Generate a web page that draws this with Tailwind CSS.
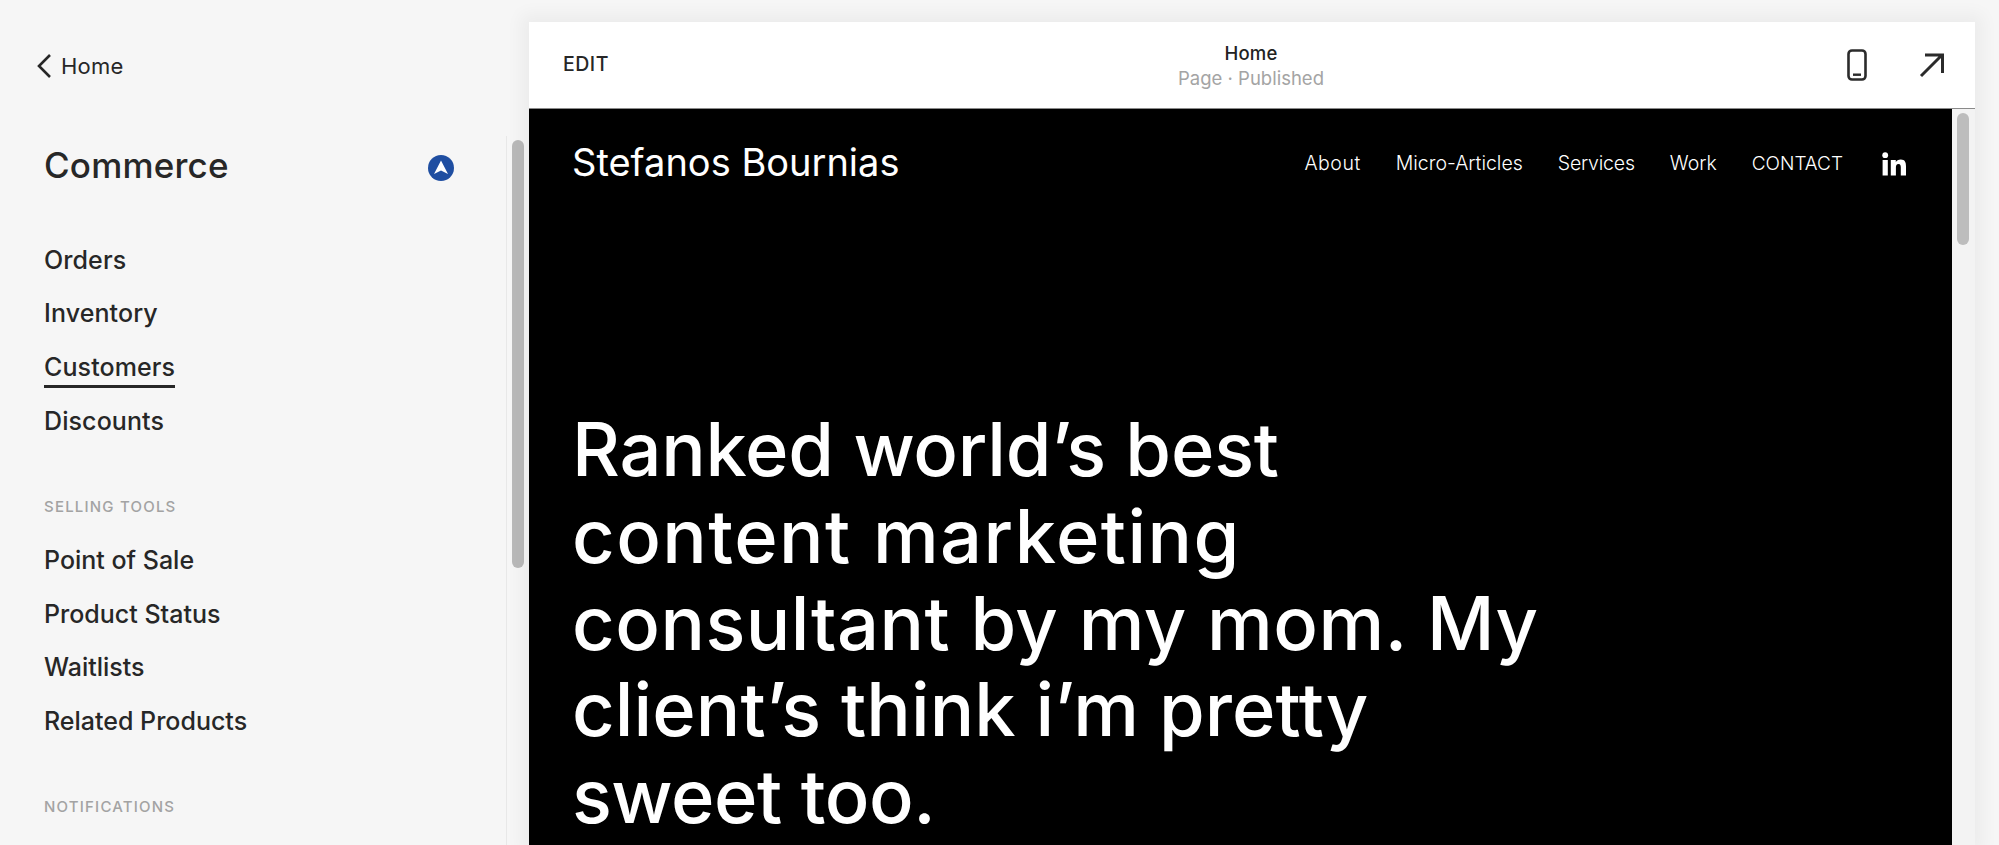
<!doctype html>
<html><head><meta charset="utf-8"><script src="https://cdn.jsdelivr.net/npm/@tailwindcss/browser@4"></script></head>
<body class="m-0">
<div class="flex h-[845px] w-[1999px] overflow-hidden bg-[#f6f6f6] font-['Inter',sans-serif] text-[#272727]">
  <aside class="flex h-full w-[529px] shrink-0">
    <div class="h-full w-[506px] shrink-0">
      <div class="flex h-[132px] items-center gap-[9px] pl-[36px]">
        <svg class="h-[26px] w-[16px]" viewBox="0 0 16 26" fill="none" stroke="#272727" stroke-width="2.6"><path d="M14 2 3 13l11 11"/></svg>
        <span class="text-[22px] leading-none tracking-[0.2px]">Home</span>
      </div>
      <div class="flex h-[66px] items-center justify-between pl-[44px] pr-[52px]">
        <h1 class="text-[35px] font-medium leading-none tracking-[0.2px]">Commerce</h1>
        <svg class="mt-[5px] h-[26px] w-[26px]" viewBox="0 0 26 26"><circle cx="13" cy="13" r="13" fill="#1f4ea1"/><path d="M13 5.5 20 19l-7-3.6L6 19z" fill="#fff"/></svg>
      </div>
      <nav class="flex flex-col pl-[44px] pt-[35px] text-[25px] font-medium leading-[54px] tracking-[0.1px]">
        <a class="h-[53px]">Orders</a>
        <a class="h-[54px]">Inventory</a>
        <a class="relative h-[54px] w-fit">Customers<span class="absolute bottom-[6px] left-0 h-[3px] w-full bg-[#272727]"></span></a>
        <a class="h-[54px]">Discounts</a>
      </nav>
      <p class="mt-[49px] pl-[44px] text-[15px] font-medium leading-[20px] tracking-[1.2px] text-[#a3a3a3]">SELLING TOOLS</p>
      <nav class="flex flex-col pl-[44px] pt-[16px] text-[25px] font-medium leading-[54px]">
        <a class="h-[54px]">Point of Sale</a>
        <a class="h-[53px]">Product Status</a>
        <a class="h-[54px]">Waitlists</a>
        <a class="h-[53px]">Related Products</a>
      </nav>
      <p class="mt-[50px] pl-[44px] text-[15px] font-medium leading-[20px] tracking-[1.2px] text-[#a3a3a3]">NOTIFICATIONS</p>
    </div>
    <div class="mt-[136px] h-[709px] w-[23px] border-l border-[#e8e8e8] pl-[5px]">
      <div class="mt-[4px] h-[428px] w-[12px] rounded-full bg-[#b9b9b9]"></div>
    </div>
  </aside>
  <main class="mt-[22px] flex h-[823px] w-[1446px] shrink-0 flex-col bg-white shadow-[0_0_16px_8px_rgba(0,0,0,0.045)]">
    <header class="grid h-[87px] shrink-0 grid-cols-[1fr_auto_1fr] items-center border-b border-[#8a8a8a] pl-[34px] pr-[30px]">
      <span class="text-[19.5px] font-medium tracking-[0.5px] text-[#272727]">EDIT</span>
      <div class="pr-[6px] text-center">
        <div class="text-[18.5px] font-medium leading-[25px] tracking-[0.2px] text-[#222]">Home</div>
        <div class="text-[18.5px] leading-[24px] text-[#a4a4a4]">Page · Published</div>
      </div>
      <div class="flex items-center justify-end gap-[52px]">
        <svg class="h-[32px] w-[20px]" viewBox="0 0 20 32" fill="none"><rect x="1.5" y="1.5" width="17" height="29" rx="3.5" stroke="#2b2b2b" stroke-width="2.6"/><rect x="6" y="24.5" width="8" height="2.4" fill="#2b2b2b"/></svg>
        <svg class="h-[26px] w-[26px]" viewBox="0 0 26 26" fill="none" stroke="#2b2b2b" stroke-width="3"><path d="M2 24 23 3M6 3h17.5v18"/></svg>
      </div>
    </header>
    <div class="flex min-h-0 flex-1">
      <div class="w-[1423px] shrink-0 overflow-hidden bg-black pl-[43px] pr-[46px] text-white">
        <div class="flex h-[106px] items-center justify-between">
          <div class="text-[38px] leading-none">Stefanos Bournias</div>
          <nav class="mt-[3px] flex items-center gap-[35px] text-[19.5px] font-light leading-none">
            <a class="tracking-[0.5px]">About</a><a>Micro-Articles</a><a class="tracking-[-0.2px]">Services</a><a>Work</a><a class="text-[19px]">CONTACT</a>
            <svg class="ml-[4px] h-[24px] w-[24px]" viewBox="0 0 24 24" fill="#fff"><circle cx="3.2" cy="3.2" r="2.9"/><rect x=".6" y="8" width="5.2" height="15.5"/><path d="M8.8 8h5v2.2c.8-1.5 2.6-2.6 5-2.6 4.2 0 5.2 2.9 5.2 6.8v9.1h-5.2v-8c0-2-.3-3.6-2.3-3.6s-2.6 1.6-2.6 3.6v8h-5.1z"/></svg>
          </nav>
        </div>
        <h2 class="mt-[191px] text-[74px] font-medium leading-[86.8px]">
          <span class="block tracking-[-0.2px]">Ranked world’s best</span>
          <span class="block tracking-[1.45px]">content marketing</span>
          <span class="block tracking-[0.5px]">consultant by my mom. My</span>
          <span class="block tracking-[0.1px]">client’s think i’m pretty</span>
          <span class="block tracking-[-0.5px]">sweet too.</span>
        </h2>
      </div>
      <div class="h-full w-[23px] bg-[#f3f3f3] pl-[5px] pt-[4px]">
        <div class="h-[132px] w-[12px] rounded-full bg-[#bdbdbd]"></div>
      </div>
    </div>
  </main>
</div>
</body></html>
